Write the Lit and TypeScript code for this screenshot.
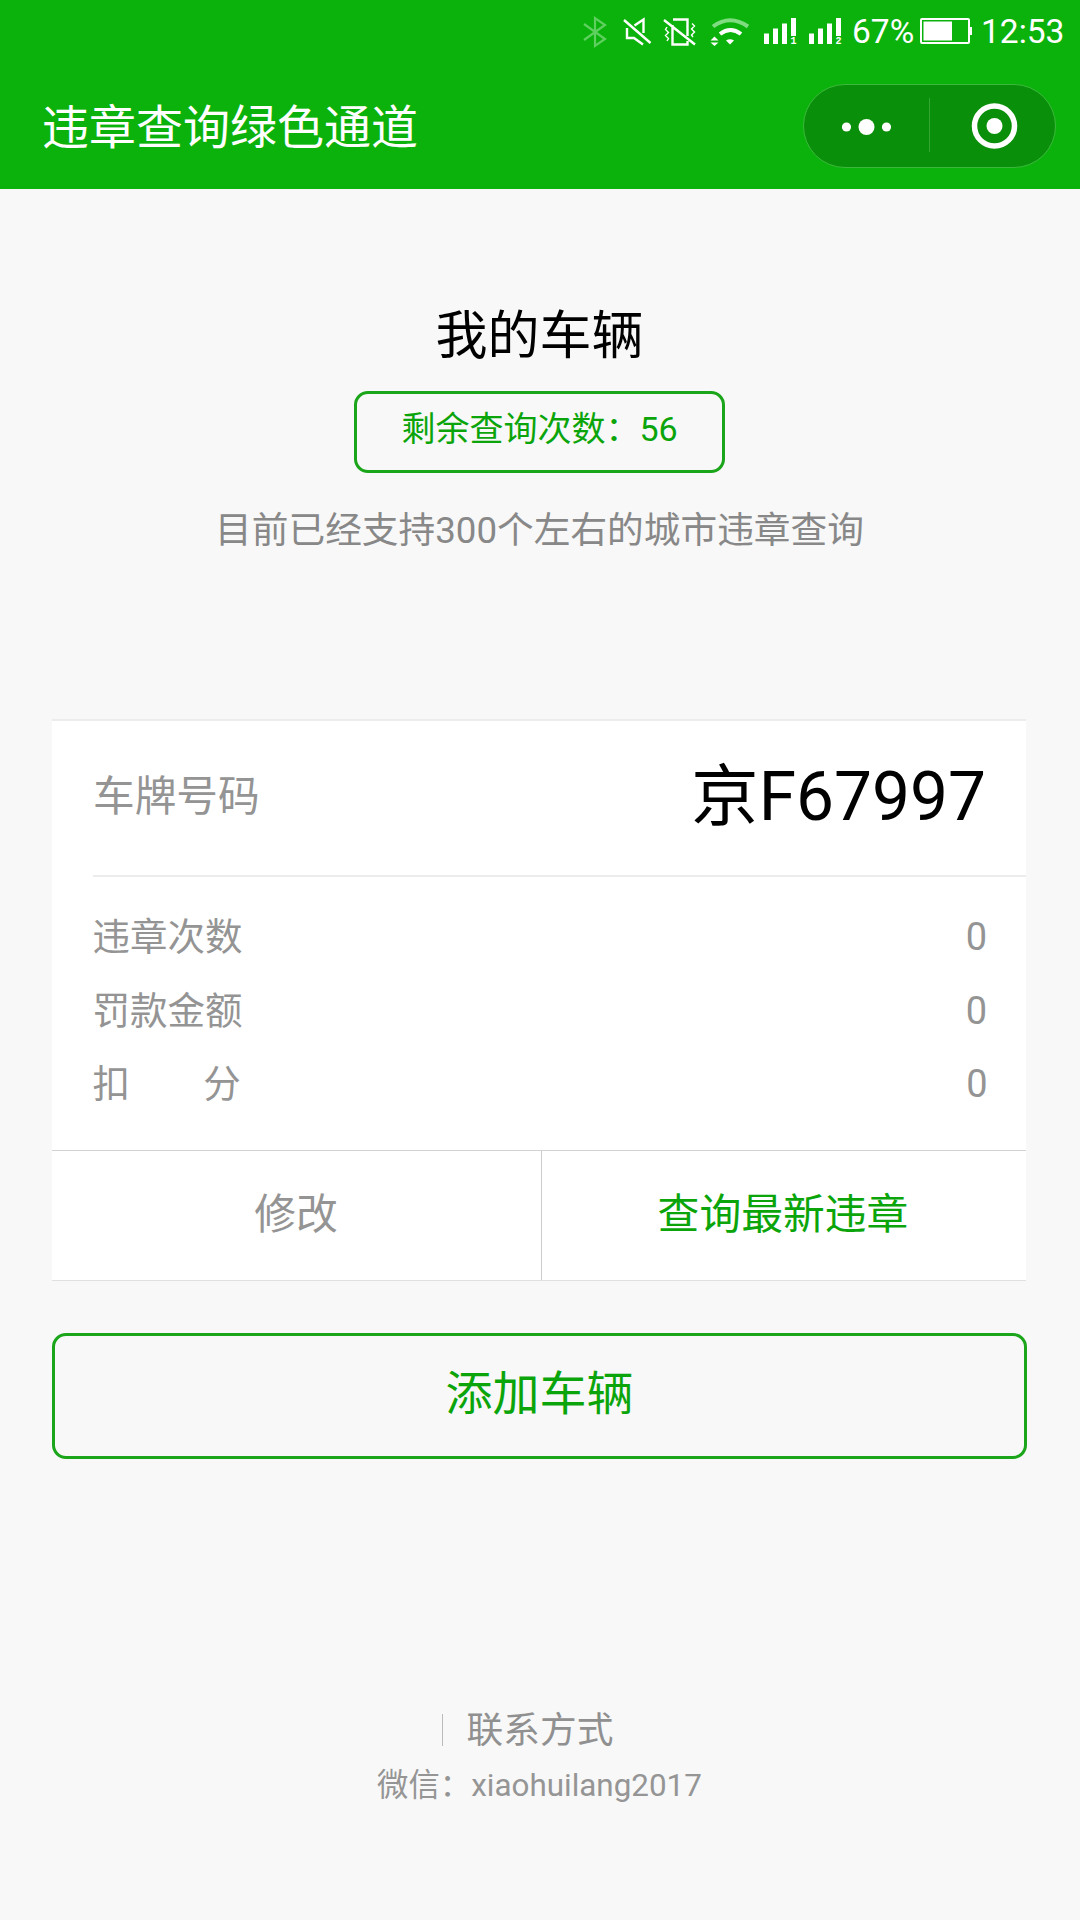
import { LitElement, html, css, svg } from "lit";
import { customElement, property } from "lit/decorators.js";

@customElement("status-bar")
class StatusBar extends LitElement {
  static styles = css`
    :host { display: flex; height: 60px; padding-left: 580px; color: #fff; font-size: 33.5px; }
    svg { display: block; flex: none; }
    .percent { width: 67px; line-height: 64px; white-space: nowrap; }
    .time { padding-left: 8px; line-height: 64px; white-space: nowrap; }
    .sim { font: bold 10px "Liberation Mono", monospace; }
  `;

  private signal(x: number, sim: string) {
    return svg`
      <g fill="#fff">
        <path d="M${x} 33.5h5V44h-5zM${x + 9} 28.5h5V44h-5zM${x + 18} 23.5h5V44h-5zM${x + 27} 18h5v18h-5z" />
        <text class="sim" x=${x + 26.5} y="44">${sim}</text>
      </g>`;
  }

  render() {
    return html`
      <svg width="35" height="60" viewBox="580 0 35 60" fill="none" stroke="#5fd05f" stroke-width="2.2">
        <path d="M584 24L605 39L595 46V18L605 25L584 40" />
      </svg>
      <svg width="43" height="60" viewBox="615 0 43 60" fill="none" stroke="#fff" stroke-width="2.4">
        <path d="M624 20L650.5 43M634.5 25.5L643.5 19.5V33M627 28V38H634L643 44.5" />
      </svg>
      <svg width="47" height="60" viewBox="658 0 47 60" fill="none" stroke="#fff" stroke-width="2.4">
        <path d="M664 20L695 44.5M672.5 25V44.5H687.5V41M673 19.5H687.5V36" />
        <path d="M667 27L665.5 29.5L668.5 32.5L665.5 35.5L668.5 38.5L667 41M692 23.5L694.5 26L691.5 29L694.5 32L691.5 35L693 37" stroke-width="1.4" />
      </svg>
      <svg width="53" height="60" viewBox="705 0 53 60" fill="none">
        <path d="M713 26.5Q730 14 748 26.5" stroke="#80dc80" stroke-width="4" />
        <path d="M720 34Q730.5 26 741 34" stroke="#fff" stroke-width="4" />
        <path d="M726 40.5Q730 38 734 40.5L730 44.5zM710.5 40.5L714.5 36.5L718.5 40.5zM710.5 42.5H718.5L714.5 46z" fill="#fff" />
      </svg>
      <svg width="45" height="60" viewBox="758 0 45 60">${this.signal(764, "1")}</svg>
      <svg width="49" height="60" viewBox="803 0 49 60">${this.signal(809, "2")}</svg>
      <span class="percent">67%</span>
      <svg width="54" height="60" viewBox="919 0 54 60" fill="#fff">
        <rect x="921" y="19" width="48" height="24" rx="1" fill="none" stroke="#fff" stroke-width="2" />
        <path d="M923.5 21.5H952V40.5H923.5zM969 27H972V35H969z" />
      </svg>
      <span class="time">12:53</span>
    `;
  }
}

@customElement("nav-capsule")
class NavCapsule extends LitElement {
  static styles = css`
    :host { display: block; }
    svg { display: block; }
  `;
  render() {
    return html`
      <svg width="254" height="84" viewBox="803 84 254 84">
        <rect x="803.5" y="84.5" width="252" height="83" rx="41.5" fill="#0a8f0b" stroke="#3cb93c" />
        <path d="M929.5 98V152" stroke="#32a832" />
        <g fill="#fff">
          <circle cx="846.5" cy="127" r="4.6" />
          <circle cx="866.5" cy="127" r="8" />
          <circle cx="886.5" cy="127" r="4.6" />
          <circle cx="994.5" cy="126" r="8" />
        </g>
        <circle cx="994.5" cy="126" r="20" fill="none" stroke="#fff" stroke-width="5.5" />
      </svg>
    `;
  }
}

@customElement("stat-row")
class StatRow extends LitElement {
  @property() label = "";
  @property() value = "";
  static styles = css`
    :host { display: flex; justify-content: space-between; height: 73.5px; line-height: 77px; white-space: pre; }
    .value { font-size: 38px; line-height: 76px; }
  `;
  render() {
    return html`<span>${this.label}</span><span class="value">${this.value}</span>`;
  }
}

@customElement("app-root")
class AppRoot extends LitElement {
  static styles = css`
    :host {
      display: block; box-sizing: border-box; width: 1080px; height: 1920px; overflow: hidden;
      background: #f8f8f8; color: #888;
      font-family: Roboto, "Noto Sans CJK SC", sans-serif;
    }
    .header { height: 189px; background: #0cb20c; }
    .nav { display: flex; justify-content: space-between; align-items: flex-start; padding: 24px 23px 0 42px; }
    .title { font-size: 47px; line-height: 88px; color: #fff; }
    .hero { display: flex; flex-direction: column; align-items: center; height: 530px; box-sizing: border-box; padding: 108px 1px 0 0; }
    .heading { font-size: 52px; line-height: 80px; color: #000; }
    .quota {
      box-sizing: border-box; width: 371px; height: 82px; margin-top: 14px; border: 3px solid #1aa51a;
      border-radius: 14px; text-align: center; font-size: 34px; line-height: 70px; color: #0ba50b;
    }
    .note { margin-top: 28px; font-size: 36.7px; line-height: 60px; }
    .card { margin: 0 54px 0 52px; background: #fff; border-top: 2px solid #ececec; border-bottom: 1px solid #e0e0e0; color: #949494; }
    .plate {
      display: flex; justify-content: space-between; margin-left: 41px; padding-right: 40px;
      height: 154px; line-height: 152px; border-bottom: 2px solid #ececec; font-size: 41.7px;
    }
    .number { font-size: 67.6px; line-height: 153px; color: #000; }
    .stats { height: 273px; box-sizing: border-box; padding: 22px 39px 0 40.5px; font-size: 37.5px; }
    .spread { word-spacing: -1px; letter-spacing: -0.6px; }
    .actions { display: grid; grid-template-columns: 489px 1fr; height: 129px; border-top: 1px solid #d2d2d2; text-align: center; font-size: 41.8px; line-height: 127px; }
    .edit { padding-right: 1px; }
    .query { border-left: 1px solid #ccc; padding-right: 2px; color: #0ba50b; }
    .add {
      box-sizing: border-box; height: 126px; margin: 52px 53px 0 52px; border: 3px solid #1aa51a;
      border-radius: 14px; text-align: center; font-size: 47px; line-height: 115px; color: #0ba50b;
    }
    .contact { display: flex; justify-content: center; align-items: center; margin-top: 238px; height: 60px; font-size: 36.7px; padding-right: 37px; color: #909090; }
    .bar { width: 1px; height: 32px; margin: 5px 24px 0 12px; background: #bbb; }
    .wechat { margin-top: 4px; padding-right: 1px; text-align: center; font-size: 31.4px; line-height: 50px; color: #959595; }
  `;

  render() {
    return html`
      <div class="header">
        <status-bar></status-bar>
        <div class="nav"><span class="title">违章查询绿色通道</span><nav-capsule></nav-capsule></div>
      </div>
      <div class="hero">
        <div class="heading">我的车辆</div>
        <div class="quota">剩余查询次数：56</div>
        <div class="note">目前已经支持300个左右的城市违章查询</div>
      </div>
      <div class="card">
        <div class="plate"><span>车牌号码</span><span class="number">京F67997</span></div>
        <div class="stats">
          <stat-row label="违章次数" value="0"></stat-row>
          <stat-row label="罚款金额" value="0"></stat-row>
          <stat-row class="spread" label="扣　　分" value="0"></stat-row>
        </div>
        <div class="actions"><div class="edit">修改</div><div class="query">查询最新违章</div></div>
      </div>
      <div class="add">添加车辆</div>
      <div class="contact"><span class="bar"></span><span>联系方式</span></div>
      <div class="wechat">微信：xiaohuilang2017</div>
    `;
  }
}
